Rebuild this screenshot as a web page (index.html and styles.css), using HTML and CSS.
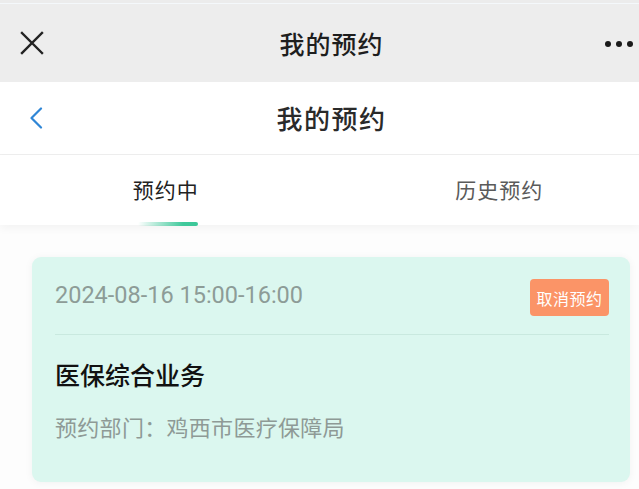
FILE: index.html
```html
<!DOCTYPE html>
<html lang="zh-CN">
<head>
<meta charset="utf-8">
<link rel="stylesheet" href="styles.css">
</head>
<body>
<div class="status"></div>
<header class="wx-bar">
  <span class="wx-close">
    <svg width="24" height="24" viewBox="0 0 24 24"><path d="M2 2 L22 22 M22 2 L2 22" stroke="#222" stroke-width="2.4" fill="none" stroke-linecap="square"/></svg>
  </span>
  <h1 class="wx-title">我的预约</h1>
  <span class="wx-more"><i></i><i></i><i></i></span>
</header>
<nav class="nav">
  <span class="nav-back">
    <svg width="14" height="22" viewBox="0 0 14 22"><path d="M12 1.5 L2.5 11 L12 20.5" stroke="#2f86d6" stroke-width="2.2" fill="none" stroke-linecap="round" stroke-linejoin="round"/></svg>
  </span>
  <h2 class="nav-title">我的预约</h2>
</nav>
<div class="tabs">
  <div class="tab active">预约中<span class="ind"></span></div>
  <div class="tab">历史预约</div>
</div>
<main class="list">
  <section class="card">
    <div class="card-head">
      <span class="time">2024-08-16 15:00-16:00</span>
      <button class="cancel">取消预约</button>
    </div>
    <div class="card-body">
      <div class="biz">医保综合业务</div>
      <div class="dept">预约部门：鸡西市医疗保障局</div>
    </div>
  </section>
</main>
</body>
</html>
```
FILE: styles.css
```css
* { box-sizing: border-box; margin: 0; padding: 0; }
html, body { width: 639px; height: 489px; overflow: hidden; }
body {
  background: #fdfdfd;
  font-family: "Noto Sans CJK SC", "Noto Sans", sans-serif;
  color: #222;
}
.status { height: 4px; background: #ececec; border-bottom: 1px solid #f4f8fb; }
.wx-bar {
  height: 78px;
  background: #ededed;
  display: flex;
  align-items: center;
  justify-content: center;
  position: relative;
}
.wx-close { position: absolute; left: 20px; top: 27px; display: flex; }
.wx-title { font-size: 25px; font-weight: 500; color: #1e1e1e; letter-spacing: 1px; margin-left: 24px; }
.wx-more { position: absolute; right: 6px; top: 37px; display: flex; gap: 5px; }
.wx-more i { width: 6px; height: 6px; border-radius: 50%; background: #1a1a1a; display: block; }
.nav {
  height: 73px;
  background: #fff;
  border-bottom: 1px solid #eeeeee;
  display: flex;
  align-items: center;
  justify-content: center;
  position: relative;
}
.nav-back { position: absolute; left: 29px; top: 25px; display: flex; }
.nav-title { font-size: 26px; font-weight: 500; color: #2a2a2a; letter-spacing: 1.5px; margin-left: 24px; margin-top: -2px; }
.tabs {
  height: 70px;
  background: #fff;
  display: flex;
  box-shadow: 0 4px 8px rgba(0,0,0,0.04);
  position: relative;
}
.tab {
  flex: 1;
  display: flex;
  align-items: center;
  justify-content: center;
  font-size: 21px;
  letter-spacing: 1px;
  color: #5a5a5a;
  position: relative;
  margin-top: -2px;
}
.tab:first-child { padding-left: 26px; }
.tab:last-child { padding-left: 54px; }
.tab.active { color: #222; }
.ind {
  position: absolute;
  left: 138px;
  bottom: -1px;
  width: 60px;
  height: 4px;
  border-radius: 2px;
  background: linear-gradient(90deg, rgba(60,201,154,0) 0%, #3fc99b 75%, #3bc798 100%);
}
.list { padding: 32px 9px 0 32px; }
.card {
  background: #dbf7ef;
  border-radius: 9px;
  height: 225px;
  padding: 0 21px 0 23px;
  box-shadow: 0 1px 8px rgba(0,0,0,0.05);
}
.card-head {
  height: 78px;
  display: flex;
  align-items: center;
  justify-content: space-between;
  border-bottom: 1px solid #c9e9df;
}
.time {
  font-family: Roboto, "Noto Sans", sans-serif;
  font-size: 23.5px;
  color: #8d9c97;
  margin-top: -2px;
}
.cancel {
  width: 79px;
  height: 37px;
  border: none;
  border-radius: 4px;
  background: #fb9467;
  color: #fff;
  font-family: "Noto Sans CJK SC", sans-serif;
  font-size: 16px;
  letter-spacing: 0.5px;
  margin-top: 4px;
}
.card-body { padding-top: 20px; }
.biz { font-size: 25px; font-weight: 500; color: #111; line-height: 38px; }
.dept { font-size: 22px; letter-spacing: 0.3px; color: #8e9a96; margin-top: 18px; line-height: 30px; }
```
